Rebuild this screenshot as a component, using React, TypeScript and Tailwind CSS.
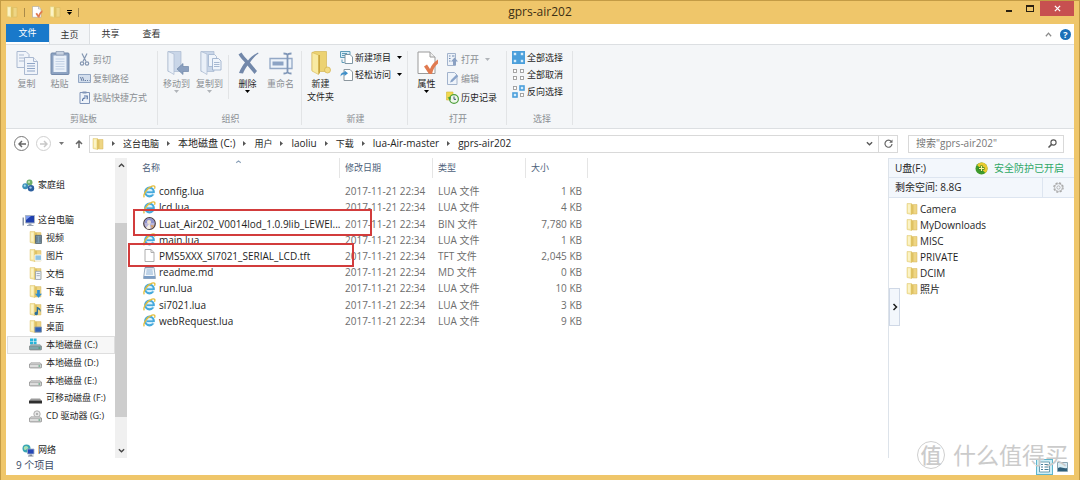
import type { ReactNode } from 'react'

type Kind = 'web' | 'bin' | 'blank' | 'md'

const FILES: { name: string; kind: Kind; type: string; size: string }[] = [
  { name: 'config.lua', kind: 'web', type: 'LUA 文件', size: '1 KB' },
  { name: 'lcd.lua', kind: 'web', type: 'LUA 文件', size: '4 KB' },
  { name: 'Luat_Air202_V0014lod_1.0.9lib_LEWEI...', kind: 'bin', type: 'BIN 文件', size: '7,780 KB' },
  { name: 'main.lua', kind: 'web', type: 'LUA 文件', size: '1 KB' },
  { name: 'PMS5XXX_SI7021_SERIAL_LCD.tft', kind: 'blank', type: 'TFT 文件', size: '2,045 KB' },
  { name: 'readme.md', kind: 'md', type: 'MD 文件', size: '0 KB' },
  { name: 'run.lua', kind: 'web', type: 'LUA 文件', size: '10 KB' },
  { name: 'si7021.lua', kind: 'web', type: 'LUA 文件', size: '3 KB' },
  { name: 'webRequest.lua', kind: 'web', type: 'LUA 文件', size: '9 KB' },
]

const CRUMBS = ['这台电脑', '本地磁盘 (C:)', '用户', 'laoliu', '下载', 'lua-Air-master', 'gprs-air202']

const USB_FOLDERS = ['Camera', 'MyDownloads', 'MISC', 'PRIVATE', 'DCIM', '照片']

/* ---------- icons ---------- */

function FolderIcon({ className = 'size-3', children }: { className?: string; children?: ReactNode }) {
  return (
    <svg viewBox="0 0 12 12" className={`shrink-0 ${className}`} aria-hidden="true">
      <path d="M1 .5h4.500v11L1 10.500z" fill="#f6e8a4" stroke="#dfc672" strokeWidth=".5" />
      <path d="M6.500 1.500H11v9.500H6.500z" fill="#eed584" stroke="#d4b65c" strokeWidth=".5" />
      <path d="M5 .5 7.500 2.200v8.300L5 11.700z" fill="#dfc263" />
      <path d="M2 1.500h2v8.300l-2-.4z" fill="#fbf3c6" />
      {children}
    </svg>
  )
}

function BigFolder() {
  return (
    <svg viewBox="0 0 24 24" className="size-6" aria-hidden="true">
      <path d="M3 1.500 6 .5h11.500v20H6l-3-1z" fill="#ecd272" stroke="#cfae48" strokeWidth=".6" />
      <path d="M3 1.500 9.500 4v19.500L3 20z" fill="#f8eaa2" stroke="#d6b755" strokeWidth=".6" />
      <path d="M9.500 4H11v18l-1.500 1.500z" fill="#c9a53c" />
      <circle cx="18.500" cy="19" r="3" fill="#f3dc86" stroke="#d3b14a" strokeWidth=".7" />
    </svg>
  )
}

function CopyIcon() {
  return (
    <svg viewBox="0 0 24 24" className="size-6" fill="#f0f4fa" stroke="#aab9d0" aria-hidden="true">
      <path d="M2 .5h9l3 3v13H2z" />
      <path d="M4 4h5M4 7h6M4 10h5" />
      <path d="M9.500 6.500h9l4 4v13h-13z" />
      <path d="M18.500 6.500v4h4" />
      <path d="M12 12.500h8M12 15h8M12 17.500h8M12 20h8" stroke="#8fa5c6" />
    </svg>
  )
}

function PasteIcon() {
  return (
    <svg viewBox="0 0 24 24" className="size-6" aria-hidden="true">
      <rect x="3" y="2" width="18" height="21.500" rx="1" fill="#8da3c2" stroke="#7389aa" />
      <path d="M5.500 4.500h13V21h-13z" fill="#eaf1fa" />
      <path d="M8 .5h8v3.500H8z" fill="#c8d3e2" stroke="#8797af" strokeWidth=".7" />
      <path d="M7.500 8h9M7.500 10.500h9M7.500 13h9M7.500 15.500h9M7.500 18h9" stroke="#c2d1e5" />
    </svg>
  )
}

function MoveToIcon({ copy = false }: { copy?: boolean }) {
  return (
    <svg viewBox="0 0 24 24" className="size-6" aria-hidden="true">
      <path d="M3 .5h13v20H3z" fill="#c9d6e8" stroke="#a9b9d0" strokeWidth=".7" />
      <path d="M3 .5 9 3v20.500L3 20z" fill="#eaf0f8" stroke="#a9b9d0" strokeWidth=".7" />
      {copy ? (
        <>
          <path d="M10.500 3.500h6l2 2v10h-8z" fill="#f0f5fb" stroke="#9fb2cd" strokeWidth=".8" />
          <path d="M14.500 7.500h6l2.500 2.500v9h-8.500z" fill="#f0f5fb" stroke="#94a9c8" strokeWidth=".8" />
          <path d="M16 11.500h5.500M16 13.500h5.500M16 15.500h5.500" stroke="#94a9c8" strokeWidth=".8" />
        </>
      ) : (
        <path d="M12 18l6-5.500v3h5.500v5H18v3z" fill="#8ba0bf" stroke="#6f86a8" strokeWidth=".7" />
      )}
    </svg>
  )
}

function DeleteIcon() {
  return (
    <svg viewBox="0 0 24 24" className="size-6" fill="#7288aa" aria-hidden="true">
      <path d="M2.500 3.500 5.500 1.500c2 3 4 5.500 6.500 8 3-3.500 6-6 10-8l.5 1c-3.500 2.500-6 5-8.500 9 2 2.500 4.500 5.500 7 8.500l-2.500 3c-2.500-3-4.500-5.500-7-8.500-2 2.500-3.500 5.500-4.500 8l-4-.5c1.500-4 3.500-7.500 6-10.500C6.500 9 4.500 6.500 2.500 3.500z" />
    </svg>
  )
}

function RenameIcon() {
  return (
    <svg viewBox="0 0 24 24" className="size-6" fill="none" aria-hidden="true">
      <path d="M1 7.500h22v10H1z" fill="#edf3fa" stroke="#93a8c6" strokeWidth="1.300" />
      <path d="M3.500 10.500h11v4h-11z" fill="#8ca3c4" />
      <path
        d="M14.500 2.500c2 0 3.500.3 4 1.500.5-1.200 2-1.500 4-1.500M14.500 22.500c2 0 3.500-.3 4-1.500.5 1.200 2 1.500 4 1.500M18.500 4v17"
        stroke="#8097b8"
        strokeWidth="1.800"
      />
    </svg>
  )
}

function PropertiesIcon({ className = 'size-6' }: { className?: string }) {
  return (
    <svg viewBox="0 0 24 24" className={className} aria-hidden="true">
      <path d="M3 1h12l5 5v16.500H3z" fill="#fff" stroke="#9a9a9a" />
      <path d="M15 1v5h5" fill="#eee" stroke="#9a9a9a" />
      <path d="M9 15.500 12 13.500l3 4.500C16.500 14 19 11 23 8.500v4c-3.500 3-5 6-6 10.500h-3z" fill="#e07a50" />
    </svg>
  )
}

function CutIcon() {
  return (
    <svg viewBox="0 0 13 13" className="size-[13px]" fill="none" stroke="#8597b2" strokeWidth="1.200" aria-hidden="true">
      <path d="M4 .5 8 8.500M9 .5 5 8.500" />
      <circle cx="4" cy="10.500" r="1.700" />
      <circle cx="9" cy="10.500" r="1.700" />
    </svg>
  )
}

function CopyPathIcon() {
  return (
    <svg viewBox="0 0 13 13" className="size-[13px]" aria-hidden="true">
      <path d="M.5 2.500h12v8H.5z" fill="#d3deed" stroke="#93a7c4" />
      <path d="M2.500 5l1.500 4M4.500 5 6 9M7 8.500h1M9 8.500h1M11 8.500h.5" stroke="#5b7398" strokeWidth=".9" />
    </svg>
  )
}

function PasteLinkIcon() {
  return (
    <svg viewBox="0 0 13 13" className="size-[13px]" aria-hidden="true">
      <path d="M2 1.500h9.500v11H2z" fill="#eef3fa" stroke="#8095b8" />
      <path d="M4.500.5h4v2h-4z" fill="#8095b8" />
      <path d="M4.500 10c0-2 .8-3.200 3-3.200M6 5h3.200v3.200" fill="none" stroke="#5674a4" strokeWidth="1.200" />
    </svg>
  )
}

function NewItemIcon() {
  return (
    <svg viewBox="0 0 13 13" className="size-[13px]" aria-hidden="true">
      <path d="M.5.500h9.500v6H.5z" fill="#d8ecf6" stroke="#5f9cb8" />
      <path d="M2 2.500h5M2 4.500h3" stroke="#5f9cb8" />
      <path d="M5 3.500h5l2.500 2.500v6.500H5z" fill="#fff" stroke="#7f96a4" />
      <path d="M2 8.500v3h2.500" fill="none" stroke="#5f9cb8" />
    </svg>
  )
}

function EasyAccessIcon() {
  return (
    <svg viewBox="0 0 13 13" className="size-[13px]" aria-hidden="true">
      <path d="M4 1.500h6l2.500 2.500v8.500H4z" fill="#fff" stroke="#8c979e" />
      <path d="M.5 8.500c0-3 1.500-4.300 4-4.300V2.500L8 5.300 4.500 8V6.300C2.800 6.300 1.500 7 .5 8.500z" fill="#3f8fc9" />
    </svg>
  )
}

function OpenIcon() {
  return (
    <svg viewBox="0 0 13 13" className="size-[13px]" aria-hidden="true">
      <path d="M1.500.500h8v12h-8z" fill="#edf2f9" stroke="#a2b3cc" />
      <path d="M3 3h1.500M3 5.500h1.500M3 8h1.500M6 3h2.500" stroke="#6f8ab0" />
      <path d="M8.500 4.500 12 8.500h-2V12H7V8.500H5z" fill="#8aa0c2" />
    </svg>
  )
}

function EditIcon() {
  return (
    <svg viewBox="0 0 13 13" className="size-[13px]" aria-hidden="true">
      <path d="M1.500.500h7l2.500 2.500v9.500H1.500z" fill="#eff4fa" stroke="#a2b3cc" />
      <path d="M4 10.500 5 8l5.500-5.500 1.700 1.700L6.500 9.700z" fill="#8aa3c8" />
    </svg>
  )
}

function HistoryIcon() {
  return (
    <svg viewBox="0 0 13 13" className="size-[13px]" aria-hidden="true">
      <path d="M.5 1h6.500v8H.5z" fill="#f0d94e" stroke="#d3b83a" strokeWidth=".6" />
      <circle cx="8" cy="8" r="4.400" fill="#eef6ea" stroke="#4d9f3a" strokeWidth="1.200" />
      <path d="M8 5.500V8.300h2" fill="none" stroke="#35506e" />
      <path d="M1.500 6.500 5 6 4.500 9.500z" fill="#3f9a35" />
    </svg>
  )
}

const CELLS = [
  [0, 0],
  [7, 0],
  [0, 7],
  [7, 7],
]

function SelectIcon({ mode }: { mode: 'all' | 'none' | 'invert' }) {
  return (
    <svg viewBox="0 0 13 13" className="size-[13px]" aria-hidden="true">
      {mode === 'all' && <path d="M0 0h13v13H0z" fill="#4b9fdb" />}
      {CELLS.map(([x, y], i) => {
        const on = mode === 'all' || (mode === 'invert' && (i === 1 || i === 2))
        return on ? (
          <rect key={i} x={x + 1} y={y + 1} width="4" height="4" fill="#d8edfb" stroke="#4b9fdb" strokeWidth="1.600" />
        ) : (
          <rect key={i} x={x + 1.5} y={y + 1.5} width="3" height="3" fill="#fff" stroke="#9c9c9c" strokeWidth=".9" />
        )
      })}
    </svg>
  )
}

function FileIcon({ kind }: { kind: Kind }) {
  return (
    <svg viewBox="0 0 13 13" className="size-[13px] shrink-0" aria-hidden="true">
      {kind === 'web' && (
        <>
          <circle cx="6.500" cy="7" r="4.300" fill="#d9f1fc" stroke="#46a9dc" strokeWidth="2.200" />
          <path d="M3.500 7.200h7" stroke="#46a9dc" strokeWidth="1.700" />
          <path d="M9.500 8.800h3" stroke="#fff" strokeWidth="1.300" />
          <path
            d="M1.300 12.300C-.5 10 4 3 9 1.200c2.500-.9 3.500.3 2.500 2.600"
            fill="none"
            stroke="#e3bd3c"
            strokeWidth="1.300"
          />
        </>
      )}
      {kind === 'bin' && (
        <>
          <circle cx="6.500" cy="6.500" r="5.800" fill="#b9b6da" stroke="#4b3c3c" strokeWidth="1.200" />
          <path d="M1.500 6a5 5 0 0 1 10 0z" fill="#8f93cc" />
          <path d="M6.500 6.500 3 11a5.500 5.500 0 0 0 4.500.8z" fill="#f5efe6" />
          <circle cx="6" cy="5" r="2" fill="#f1e3d2" />
          <path d="M7.500 8 11.200 8.500 9 11.500z" fill="#d9a067" />
        </>
      )}
      {kind === 'blank' && <path d="M2 .5h6l3 3v9H2zM8 .5v3h3" fill="#fff" stroke="#a5a5a5" strokeWidth=".9" />}
      {kind === 'md' && (
        <>
          <path d="M2 1.500h9l1.500 11h-12z" fill="#f3f7fb" stroke="#8ba0b8" strokeWidth=".9" />
          <path d="M3.500 4h6M3.300 6h6.500M3 8h7" stroke="#7fa6cf" strokeWidth=".9" />
          <path d="M1 10h11v2.500H1z" fill="#7a9cc4" />
          <path d="M3 .5v2M5 .5v2M7 .5v2M9 .5v2" stroke="#69809b" strokeWidth=".8" />
        </>
      )}
    </svg>
  )
}

function HomeGroupIcon() {
  return (
    <svg viewBox="0 0 13 13" className="size-[13px]" aria-hidden="true">
      <circle cx="7.500" cy="3.500" r="3" fill="#6fae6a" />
      <circle cx="3.300" cy="7.300" r="3" fill="#3b8fb8" />
      <circle cx="9" cy="9.300" r="3.200" fill="#2c5f9e" />
      <circle cx="7" cy="3" r="1.200" fill="#b8dfb0" />
      <circle cx="2.800" cy="6.700" r="1.100" fill="#a5dcec" />
      <circle cx="8.500" cy="8.600" r="1.200" fill="#9cc4ea" />
    </svg>
  )
}

function ComputerIcon() {
  return (
    <svg viewBox="0 0 13 13" className="size-[13px]" aria-hidden="true">
      <path d="M3.500 1.500h9V9h-9z" fill="#1f3fae" stroke="#a9b4c4" />
      <path d="M4 2h5L4 6z" fill="#7f9df0" />
      <path d="M6.500 9.500h3v1.500h2v1H5v-1h1.500z" fill="#9aa5b5" />
      <path d="M.5 3.500h1.500v8H.5z" fill="#8793a5" />
    </svg>
  )
}

function NetworkIcon() {
  return (
    <svg viewBox="0 0 13 13" className="size-[13px]" aria-hidden="true">
      <circle cx="4.500" cy="4.500" r="4" fill="#3aa6b4" />
      <path d="M2 3c1.500-1.500 3-1 4 0S4 6 3 6 1.500 4 2 3z" fill="#a9e0b4" />
      <path d="M5.500 5h6.500v5H5.500z" fill="#2547b8" stroke="#9fadc4" strokeWidth=".8" />
      <path d="M7.500 10.500h2.500v1h1.500v1H6v-1h1.500z" fill="#7c879c" />
    </svg>
  )
}

function DriveIcon({ kind }: { kind: 'system' | 'disk' | 'usb' | 'cd' }) {
  const system = kind === 'system'
  return (
    <svg viewBox="0 0 13 13" className="size-[13px]" aria-hidden="true">
      {system && <path d="M1 .5h3v2.700H1zM4.600.5h3v2.700h-3zM1 3.800h3v2.700H1zM4.600 3.800h3v2.700h-3z" fill="#28b4d8" />}
      {kind === 'cd' && (
        <>
          <circle cx="8" cy="4" r="3.200" fill="#e6e6e6" stroke="#a0a0a0" strokeWidth=".8" />
          <circle cx="8" cy="4" r=".9" fill="#999" />
        </>
      )}
      {kind === 'usb' ? (
        <>
          <path d="M2 6.500h9l2 2.500H0z" fill="#9b9b9b" />
          <path d="M0 8.700h13v2.800H0z" fill="#2f2f2f" />
        </>
      ) : (
        <>
          <path d="M2 6.500h9l1.600 2H.4z" fill={system ? '#9fc3c8' : '#f2f2f2'} stroke="#9a9a9a" strokeWidth=".5" />
          <rect
            x=".4"
            y="8"
            width="12.200"
            height="3.900"
            rx="1"
            fill={system ? '#7fa5aa' : '#dcdcdc'}
            stroke="#848484"
            strokeWidth=".8"
          />
          <path d="M9.500 10h1.700" stroke="#2f8f5f" />
        </>
      )}
    </svg>
  )
}

function UserFolder({ kind }: { kind: string }) {
  return (
    <FolderIcon className="size-[13px]">
      {kind === 'video' && (
        <path d="M6 4h5.500v7.500H6zM7.300 5v5.500M10.200 5v5.500" fill="#7fa0b4" stroke="#4c5a64" strokeWidth=".7" />
      )}
      {kind === 'picture' && <path d="M5.500 5.500h6v5h-6z" fill="#8fc4e4" stroke="#fff" strokeWidth=".8" />}
      {kind === 'doc' && (
        <path d="M6 4h5v7.500H6zM7 6h3M7 8h3" fill="#eef3f8" stroke="#8d9bab" strokeWidth=".7" />
      )}
      {kind === 'download' && <path d="M7.500 4.500h2.500V8h2l-3.200 3.700L5.500 8h2z" fill="#2f8ed0" />}
      {kind === 'music' && (
        <path
          d="M8.300 3.500v6a1.600 1.600 0 1 1-1.200-1.400V3.500c2.500.8 4.400 2 3.400 5 0-1.500-1-2.500-2.200-2.800z"
          fill="#2b6f9c"
        />
      )}
      {kind === 'desktop' && <path d="M5.500 6.500h6v4.700h-6z" fill="#2f62b5" stroke="#7f93ad" strokeWidth=".8" />}
    </FolderIcon>
  )
}

function Chevron({ d, className }: { d: string; className: string }) {
  return (
    <svg viewBox="0 0 8 8" className={className} fill="none" stroke="currentColor" strokeWidth="1.500" aria-hidden="true">
      <path d={d} />
    </svg>
  )
}

function Caret({ className = 'text-black' }: { className?: string }) {
  return (
    <svg viewBox="0 0 5 3" className={`h-[3px] w-[5px] shrink-0 ${className}`} aria-hidden="true">
      <path d="M0 0h5L2.500 3z" fill="currentColor" />
    </svg>
  )
}

/* ---------- ribbon ---------- */

type ButtonProps = { icon: ReactNode; label: string; disabled?: boolean; caret?: boolean }

function BigButton({ icon, label, disabled, caret }: ButtonProps) {
  return (
    <button
      type="button"
      disabled={disabled}
      className="flex w-[33px] flex-col items-center whitespace-pre text-[#1e1e1e] disabled:text-[#8b8f94]"
    >
      {icon}
      <span className="mt-[2px] leading-[13px]">{label}</span>
      {caret && <Caret className={disabled ? 'text-[#b0b4b9]' : 'text-black'} />}
    </button>
  )
}

function SmallButton({ icon, label, disabled, caret }: ButtonProps) {
  return (
    <button
      type="button"
      disabled={disabled}
      className="flex h-[13px] items-center gap-[2px] leading-[13px] text-[#1e1e1e] disabled:text-[#8b8f94]"
    >
      {icon}
      <span>{label}</span>
      {caret && (
        <span className="pl-1">
          <Caret className={disabled ? 'text-[#b0b4b9]' : 'text-black'} />
        </span>
      )}
    </button>
  )
}

function RibbonGroup({ label, className, children }: { label: string; className: string; children: ReactNode }) {
  return (
    <section aria-label={label} className={`flex flex-col justify-between border-r border-[#e2e4e6] ${className}`}>
      <div className="flex">{children}</div>
      <div className="text-center leading-[13px] text-[#8b8f94]">{label}</div>
    </section>
  )
}

function Ribbon() {
  return (
    <div className="flex h-[85px] border-y border-[#dcdfe2] bg-[#f4f6f8] pt-[6px] pb-[3px] text-[9px]">
      <RibbonGroup label="剪贴板" className="w-[152px] pl-1">
        <BigButton icon={<CopyIcon />} label="复制" disabled />
        <BigButton icon={<PasteIcon />} label="粘贴" disabled />
        <div className="flex flex-col gap-[6px] pt-[2px] pl-[2px]">
          <SmallButton icon={<CutIcon />} label="剪切" disabled />
          <SmallButton icon={<CopyPathIcon />} label="复制路径" disabled />
          <SmallButton icon={<PasteLinkIcon />} label="粘贴快捷方式" disabled />
        </div>
      </RibbonGroup>
      <RibbonGroup label="组织" className="w-[144px] pl-[2px]">
        <BigButton icon={<MoveToIcon />} label="移动到" disabled caret />
        <BigButton icon={<MoveToIcon copy />} label="复制到" disabled caret />
        <div className="mx-[2px] mt-1 h-11 border-r border-[#e2e4e6]" />
        <BigButton icon={<DeleteIcon />} label="删除" caret />
        <BigButton icon={<RenameIcon />} label="重命名" disabled />
      </RibbonGroup>
      <RibbonGroup label="新建" className="w-[106px] pl-[2px]">
        <BigButton icon={<BigFolder />} label={'新建\n文件夹'} />
        <div className="flex flex-col gap-1 pl-[3px]">
          <SmallButton icon={<NewItemIcon />} label="新建项目" caret />
          <SmallButton icon={<EasyAccessIcon />} label="轻松访问" caret />
        </div>
      </RibbonGroup>
      <RibbonGroup label="打开" className="w-[99px] pl-[2px]">
        <BigButton icon={<PropertiesIcon />} label="属性" caret />
        <div className="flex flex-col gap-[6px] pt-[2px] pl-[3px]">
          <SmallButton icon={<OpenIcon />} label="打开" disabled caret />
          <SmallButton icon={<EditIcon />} label="编辑" disabled />
          <SmallButton icon={<HistoryIcon />} label="历史记录" />
        </div>
      </RibbonGroup>
      <RibbonGroup label="选择" className="w-[66px] pl-[5px]">
        <div className="flex flex-col gap-1">
          <SmallButton icon={<SelectIcon mode="all" />} label="全部选择" />
          <SmallButton icon={<SelectIcon mode="none" />} label="全部取消" />
          <SmallButton icon={<SelectIcon mode="invert" />} label="反向选择" />
        </div>
      </RibbonGroup>
    </div>
  )
}

function TitleBar() {
  return (
    <header className="flex h-[23px] items-start">
      <div className="flex flex-1 items-center gap-[6px] pt-[5px]">
        <FolderIcon />
        <span className="h-[9px] border-r border-[#a98a4a]" />
        <button type="button" aria-label="属性">
          <PropertiesIcon className="size-3" />
        </button>
        <button type="button" aria-label="新建文件夹">
          <FolderIcon />
        </button>
        <button type="button" aria-label="自定义快速访问工具栏" className="flex flex-col items-center gap-px">
          <span className="h-px w-[5px] bg-black" />
          <Caret />
        </button>
        <span className="h-[9px] border-r border-[#a98a4a]" />
      </div>
      <h1 className="pt-[3px] text-[12px] leading-[16px] text-[#3c2f14]">gprs-air202</h1>
      <div className="flex flex-1 justify-end">
        <button type="button" aria-label="最小化" className="flex h-[15px] w-[21px] items-center justify-center pt-[5px]">
          <span className="h-[2px] w-[6px] bg-[#2a2010]" />
        </button>
        <button type="button" aria-label="最大化" className="flex h-[15px] w-[21px] items-center justify-center">
          <span className="h-[7px] w-2 border border-t-2 border-[#2a2010]" />
        </button>
        <button
          type="button"
          aria-label="关闭"
          className="flex h-[15px] w-[34px] items-center justify-center bg-[#c75050] text-white"
        >
          <Chevron d="M1 1l6 6M7 1 1 7" className="size-[7px]" />
        </button>
      </div>
    </header>
  )
}

function RibbonTabs() {
  return (
    <div role="tablist" className="flex h-5 items-stretch bg-white text-[9px] text-[#333]">
      <button type="button" role="tab" className="mb-[2px] w-[43px] bg-[#1979ca] text-white">
        文件
      </button>
      <button
        type="button"
        role="tab"
        aria-selected="true"
        className="-mb-px w-[41px] border-x border-[#dcdfe2] bg-[#f4f6f8]"
      >
        主页
      </button>
      <button type="button" role="tab" className="w-[41px]">
        共享
      </button>
      <button type="button" role="tab" className="w-[41px]">
        查看
      </button>
      <div className="ml-auto flex items-center gap-2 pr-[3px]">
        <button type="button" aria-label="最小化功能区" className="text-[#8a8a8a]">
          <Chevron d="M1 6l3-3.500L7 6" className="size-[7px]" />
        </button>
        <button
          type="button"
          aria-label="帮助"
          className="size-[11px] rounded-full bg-[#1c70b8] text-center text-[9px] leading-[11px] font-bold text-white"
        >
          ?
        </button>
      </div>
    </div>
  )
}

function AddressBar() {
  return (
    <div className="flex h-[29px] items-center bg-white pr-[10px] pl-2">
      <button
        type="button"
        aria-label="后退"
        className="flex size-[15px] items-center justify-center rounded-full border border-[#777] text-[#666]"
      >
        <Chevron d="M4 1 1 4l3 3M1 4h7" className="size-2" />
      </button>
      <button
        type="button"
        aria-label="前进"
        disabled
        className="ml-[7px] flex size-[15px] items-center justify-center rounded-full border border-[#d0d0d0] text-[#c8c8c8]"
      >
        <Chevron d="M4 1l3 3-3 3M0 4h7" className="size-2" />
      </button>
      <button type="button" aria-label="最近浏览的位置" className="ml-2">
        <Caret className="text-[#777]" />
      </button>
      <button type="button" aria-label="上移" className="ml-[11px] text-[#666]">
        <Chevron d="M1 4l3-3 3 3M4 1v7" className="size-2" />
      </button>
      <nav
        aria-label="地址"
        className="ml-[6px] flex h-[18px] flex-1 items-center border border-[#d9d9d9] pl-[2px] text-[10px]"
      >
        <FolderIcon />
        {CRUMBS.map((crumb) => (
          <span key={crumb} className="flex items-center">
            <svg viewBox="0 0 3 5" className="mx-2 h-[5px] w-[3px]" aria-hidden="true">
              <path d="M0 0v5l3-2.500z" fill="#555" />
            </svg>
            {/* labels made only of Chinese characters run a size smaller */}
            <a href="#" className={/^[一-龥]+$/.test(crumb) ? 'text-[9px]' : 'text-[10px]'}>
              {crumb}
            </a>
          </span>
        ))}
        <button
          type="button"
          aria-label="以前的位置"
          className="ml-auto flex h-full w-[18px] items-center justify-center border-r border-[#d9d9d9] text-[#555]"
        >
          <Chevron d="M1 2.500 4 5.500 7 2.500" className="size-[7px]" />
        </button>
        <button type="button" aria-label="刷新" className="flex h-full w-[18px] items-center justify-center">
          <svg viewBox="0 0 9 9" className="size-[9px]" aria-hidden="true">
            <path d="M7.300 2.600A3.500 3.500 0 1 0 8 5" fill="none" stroke="#666" strokeWidth="1.200" />
            <path d="M8.500.5v3.300H5.200z" fill="#666" />
          </svg>
        </button>
      </nav>
      <form
        role="search"
        className="ml-[10px] flex h-[18px] w-[156px] items-center border border-[#d9d9d9] pr-[6px] pl-[7px]"
      >
        <input
          type="search"
          aria-label="搜索"
          placeholder={'搜索"gprs-air202"'}
          className="w-full min-w-0 text-[10px] placeholder:text-[#777] placeholder:opacity-100"
        />
        <svg viewBox="0 0 9 9" className="size-[9px] shrink-0" fill="none" stroke="#555" aria-hidden="true">
          <circle cx="5.500" cy="3.500" r="2.600" strokeWidth="1.100" />
          <path d="M3.600 5.400.5 8.500" strokeWidth="1.500" />
        </svg>
      </form>
    </div>
  )
}

/* ---------- navigation tree ---------- */

const PC_ITEMS: { label: string; icon: ReactNode; selected?: boolean }[] = [
  { label: '视频', icon: <UserFolder kind="video" /> },
  { label: '图片', icon: <UserFolder kind="picture" /> },
  { label: '文档', icon: <UserFolder kind="doc" /> },
  { label: '下载', icon: <UserFolder kind="download" /> },
  { label: '音乐', icon: <UserFolder kind="music" /> },
  { label: '桌面', icon: <UserFolder kind="desktop" /> },
  { label: '本地磁盘 (C:)', icon: <DriveIcon kind="system" />, selected: true },
  { label: '本地磁盘 (D:)', icon: <DriveIcon kind="disk" /> },
  { label: '本地磁盘 (E:)', icon: <DriveIcon kind="disk" /> },
  { label: '可移动磁盘 (F:)', icon: <DriveIcon kind="usb" /> },
  { label: 'CD 驱动器 (G:)', icon: <DriveIcon kind="cd" /> },
]

function NavTree() {
  return (
    <nav aria-label="导航窗格" className="flex w-[121px] shrink-0">
      <div className="flex-1 pt-[18px] pl-px text-[9px] whitespace-nowrap">
        <a href="#" className="flex h-[18px] items-center gap-[3px] pl-[15px]">
          <HomeGroupIcon />
          家庭组
        </a>
        <a href="#" className="mt-[17px] flex h-[18px] items-center gap-[3px] pl-[15px]">
          <ComputerIcon />
          这台电脑
        </a>
        <ul className="flex h-[196px] flex-col">
          {PC_ITEMS.map((item) => (
            <li key={item.label} className="min-h-0 flex-1">
              <a
                href="#"
                className={`flex h-full items-center gap-1 border pl-[21px] ${
                  item.selected ? 'border-[#dedede] bg-[#f7f7f7]' : 'border-transparent'
                }`}
              >
                {item.icon}
                {item.label}
              </a>
            </li>
          ))}
        </ul>
        <a href="#" className="mt-[17px] flex h-4 items-center gap-[3px] pl-[15px]">
          <NetworkIcon />
          网络
        </a>
      </div>
      <div className="flex w-3 flex-col items-center bg-[#f0f0f0] text-[#444]">
        <Chevron d="M1 5.500 4 2.500 7 5.500" className="mt-1 size-[7px]" />
        <div className="mt-[54px] w-full flex-1 bg-[#cdcdcd]" />
        <Chevron d="M1 2.500 4 5.500 7 2.500" className="mt-[30px] mb-1 size-[7px]" />
      </div>
    </nav>
  )
}

/* ---------- file list ---------- */

function FileList() {
  return (
    <main className="relative min-w-0 flex-1 pl-3 text-[10px] text-[#6d6d6d]">
      <table className="h-[171px] w-[449px] table-fixed border-collapse text-left">
        <thead>
          <tr className="h-[25px] align-top text-[9px] text-[#4c607a]">
            <th className="w-[201px] p-0 font-normal">
              <div className="flex h-5 items-center border-r border-[#e5e5e5] pl-[3px]">
                名称
                <Chevron d="M1 5l3-2.500L7 5" className="mb-3 ml-[75px] h-[6px] w-[7px] text-[#8aa0b8]" />
              </div>
            </th>
            <th className="w-[93px] p-0 font-normal">
              <div className="flex h-5 items-center border-r border-[#e5e5e5] pl-[5px]">修改日期</div>
            </th>
            <th className="w-[93px] p-0 font-normal">
              <div className="flex h-5 items-center border-r border-[#e5e5e5] pl-[5px]">类型</div>
            </th>
            <th className="w-[62px] p-0 font-normal">
              <div className="flex h-5 items-center border-r border-[#e5e5e5] pl-[5px]">大小</div>
            </th>
          </tr>
        </thead>
        <tbody className="leading-[14px] whitespace-nowrap">
          {FILES.map((file) => (
            <tr key={file.name}>
              <td className="p-0 pl-1">
                <a href="#" className="flex items-center gap-[3px] text-[#1e1e1e]">
                  <FileIcon kind={file.kind} />
                  {file.name}
                </a>
              </td>
              <td className="p-0 pl-[5px]">2017-11-21 22:34</td>
              <td className="p-0 pl-[5px]">{file.type}</td>
              <td className="p-0 pr-[6px] text-right">{file.size}</td>
            </tr>
          ))}
        </tbody>
      </table>
      {/* highlight frames drawn over the two firmware files */}
      <div className="absolute top-[51px] left-[6px] h-[27px] w-[239px] border-2 border-[#d23c3c]" />
      <div className="absolute top-[85px] left-px h-[24px] w-[226px] border-2 border-[#d23c3c]" />
    </main>
  )
}

/* ---------- usb side panel ---------- */

function UsbPanel() {
  return (
    <aside aria-label="U盘" className="relative w-[186px] shrink-0 border-l border-[#dde3ea] text-[10px]">
      <div className="flex h-5 items-center justify-between border-y border-[#dde5f0] bg-[#f3f7fc] pr-[10px] pl-[6px]">
        <span>U盘(F:)</span>
        <span className="flex items-center gap-[6px] text-[#2fa866]">
          <svg viewBox="0 0 13 13" className="size-[13px]" aria-hidden="true">
            <circle cx="6.500" cy="6.500" r="6" fill="#3f9a2c" />
            <path d="M6.500.5a6 6 0 0 1 4 10.500L2 3A6 6 0 0 1 6.500.5z" fill="#e9c92f" />
            <path d="M6.500 3.500v6M3.500 6.500h6" stroke="#2f7f22" strokeWidth="2.400" />
            <path d="M6.500 4v5M4 6.500h5" stroke="#fff6a0" strokeWidth="1.200" />
          </svg>
          安全防护已开启
        </span>
      </div>
      <div className="flex h-5 items-center border-b border-[#dde5f0] bg-[#f3f7fc] pl-[6px]">
        <span className="flex-1">剩余空间: 8.8G</span>
        <button
          type="button"
          aria-label="设置"
          className="flex h-full w-8 items-center justify-center border-l border-[#dde5f0]"
        >
          <svg viewBox="0 0 12 12" className="size-[11px]" fill="none" stroke="#a9a9a9" aria-hidden="true">
            <circle cx="6" cy="6" r="5" strokeWidth="1.500" strokeDasharray="2.300 1.627" />
            <circle cx="6" cy="6" r="4.200" strokeWidth=".8" />
            <circle cx="6" cy="6" r="1.800" strokeWidth=".9" />
          </svg>
        </button>
      </div>
      <ul className="flex flex-col pt-[3px] pl-[17px]">
        {USB_FOLDERS.map((name) => (
          <li key={name} className="h-4">
            <a href="#" className="flex h-4 items-center gap-[2px]">
              <FolderIcon />
              {name}
            </a>
          </li>
        ))}
      </ul>
      <button
        type="button"
        aria-label="收起"
        className="absolute top-[130px] left-0 flex h-[38px] w-[11px] items-center justify-center border border-[#cfd8e6] bg-[#f3f7fc]"
      >
        <Chevron d="M2.500 1l3 3-3 3" className="size-2" />
      </button>
    </aside>
  )
}

function StatusBar() {
  return (
    <footer className="flex h-[17px] items-center justify-between pr-[6px] pl-[10px] text-[10px] text-[#3c4c66]">
      <span className="pb-[2px] leading-[13px]">9 个项目</span>
      <span className="flex items-center gap-1">
        <button type="button" aria-label="详细信息" className="border border-[#5db5cc] bg-[#cdeef6]">
          <svg viewBox="0 0 15 14" className="h-[14px] w-[15px]" aria-hidden="true">
            <path d="M2.500 2h10v10h-10z" fill="#fff" stroke="#6d9eb0" />
            <path d="M4 4.500h2M4 7h2M4 9.500h2M7.500 4.500h4M7.500 7h4M7.500 9.500h4" stroke="#4a7f98" />
          </svg>
        </button>
        <button type="button" aria-label="大缩略图">
          <svg viewBox="0 0 11 10" className="h-[10px] w-[11px]" aria-hidden="true">
            <path d="M.5.500h10v9H.5z" fill="#d9edf5" stroke="#8aa5b2" />
            <path d="M1 6c3-2 5 1 9 0v3H1z" fill="#2f5f7a" />
          </svg>
        </button>
      </span>
    </footer>
  )
}

function Watermark() {
  return (
    <div className="pointer-events-none absolute right-[11px] bottom-[10px] flex items-center gap-2 text-[23px] leading-[30px] text-[#cbcbcb]">
      <span className="flex size-[28px] items-center justify-center rounded-full border border-[#cfcfcf] text-[21px] font-medium">
        值
      </span>
      <span>什么值得买</span>
    </div>
  )
}

export default function App() {
  return (
    <div className="relative flex min-h-screen flex-col border border-[#c39b45] bg-[#efc66a] px-[5px] pb-[5px] font-['Open_Sans','Noto_Sans_CJK_SC',sans-serif] text-[#1e1e1e]">
      <TitleBar />
      <RibbonTabs />
      <Ribbon />
      <AddressBar />
      <div className="flex flex-1 flex-col bg-white">
        <div className="flex flex-1">
          <NavTree />
          <FileList />
          <UsbPanel />
        </div>
        <StatusBar />
      </div>
      <Watermark />
    </div>
  )
}
